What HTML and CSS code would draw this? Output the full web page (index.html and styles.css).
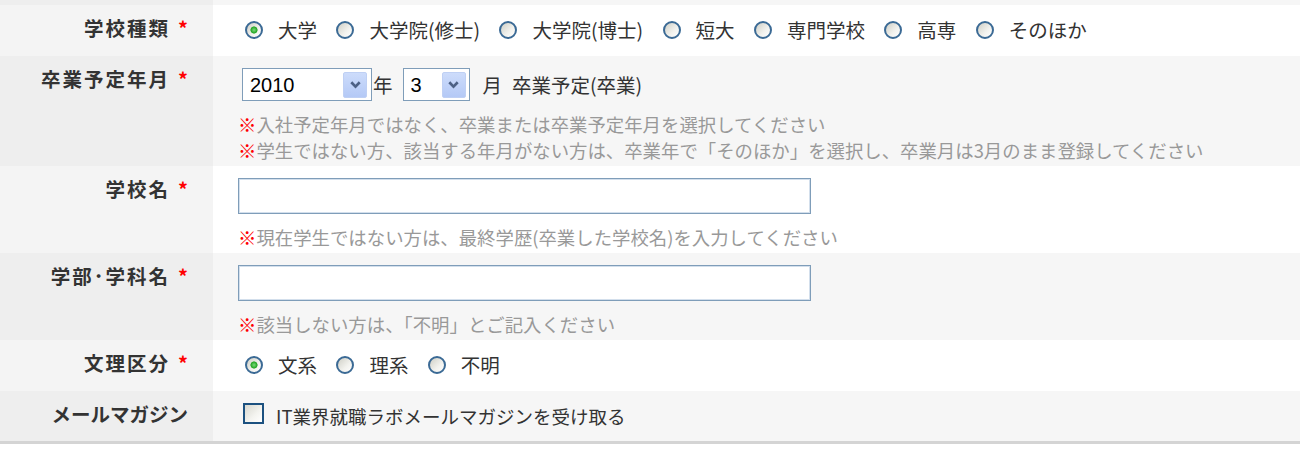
FILE: index.html
```html
<!DOCTYPE html>
<html lang="ja">
<head>
  <meta charset="UTF-8">
  <meta name="viewport" content="width=device-width, initial-scale=1.0">
  <title>エントリー</title>
  <link rel="stylesheet" href="styles.css">
</head>
<body>
  <div class="form">
    <div class="row row-alt stub">
      <div class="label"></div>
      <div class="field"></div>
    </div>

    <div class="row">
      <div class="label">学校種類<span class="req">*</span></div>
      <div class="field">
        <label class="opt"><input type="radio" name="school" checked>大学</label>
        <label class="opt"><input type="radio" name="school">大学院(修士)</label>
        <label class="opt"><input type="radio" name="school">大学院(博士)</label>
        <label class="opt"><input type="radio" name="school">短大</label>
        <label class="opt"><input type="radio" name="school">専門学校</label>
        <label class="opt"><input type="radio" name="school">高専</label>
        <label class="opt"><input type="radio" name="school">そのほか</label>
      </div>
    </div>

    <div class="row row-alt">
      <div class="label">卒業予定年月<span class="req">*</span></div>
      <div class="field field-hint">
        <div class="select-line">
          <span class="select select-year">
            <select name="year"><option>2010</option></select>
            <span class="arrow"><svg width="11" height="8" viewBox="0 0 11 8"><path d="M1.3 1.3 L5.5 5.6 L9.7 1.3" fill="none" stroke="#4d6185" stroke-width="2.7"/></svg></span>
          </span>
          <span class="unit unit-year">年</span>
          <span class="select select-month">
            <select name="month"><option>3</option></select>
            <span class="arrow"><svg width="11" height="8" viewBox="0 0 11 8"><path d="M1.3 1.3 L5.5 5.6 L9.7 1.3" fill="none" stroke="#4d6185" stroke-width="2.7"/></svg></span>
          </span>
          <span class="unit unit-month">月</span>
          <span class="status">卒業予定(卒業)</span>
        </div>
        <div class="hints">
          <p class="hint"><span class="mark">※</span>入社予定年月ではなく、卒業または卒業予定年月を選択してください</p>
          <p class="hint"><span class="mark">※</span>学生ではない方、該当する年月がない方は、卒業年で「そのほか」を選択し、卒業月は3月のまま登録してください</p>
        </div>
      </div>
    </div>

    <div class="row">
      <div class="label">学校名<span class="req">*</span></div>
      <div class="field field-hint">
        <input class="text" type="text" name="school_name">
        <div class="hints">
          <p class="hint"><span class="mark">※</span>現在学生ではない方は、最終学歴(卒業した学校名)を入力してください</p>
        </div>
      </div>
    </div>

    <div class="row row-alt">
      <div class="label">学部･学科名<span class="req">*</span></div>
      <div class="field field-hint">
        <input class="text" type="text" name="faculty">
        <div class="hints">
          <p class="hint"><span class="mark">※</span>該当しない方は、「不明」とご記入ください</p>
        </div>
      </div>
    </div>

    <div class="row">
      <div class="label">文理区分<span class="req">*</span></div>
      <div class="field">
        <label class="opt"><input type="radio" name="course" checked>文系</label>
        <label class="opt"><input type="radio" name="course">理系</label>
        <label class="opt"><input type="radio" name="course">不明</label>
      </div>
    </div>

    <div class="row row-alt">
      <div class="label label-kana">メールマガジン</div>
      <div class="field">
        <label class="check"><input type="checkbox" name="mailmag">IT業界就職ラボメールマガジンを受け取る</label>
      </div>
    </div>
  </div>
</body>
</html>
```

FILE: styles.css
```css
* {
  margin: 0;
  padding: 0;
  box-sizing: border-box;
}
body {
  font-family: "Noto Sans CJK JP", "Noto Sans", sans-serif;
  color: #333;
  background-color: #fff;
}
.form {
  border-bottom: 3px solid #d4d4d4;
}
.row {
  display: flex;
  background-color: #fff;
}
.row .label {
  flex: none;
  width: 213px;
  padding: 10px 25px 0 0;
  background-color: #f4f4f4;
  text-align: right;
  font-size: 19.5px;
  font-weight: bold;
  line-height: 26px;
  letter-spacing: 2px;
  color: #333;
}
.row .label-kana {
  letter-spacing: 0;
}
.row .field {
  flex: 1;
  padding: 12px 25px;
  font-size: 19.5px;
  line-height: 26px;
}
.row .field-hint {
  padding-bottom: 3px;
}
.row-alt {
  background-color: #f6f6f6;
}
.row-alt .label {
  background-color: #eee;
}
.stub {
  height: 5px;
}
.stub .label,
.stub .field {
  padding: 0;
}
.req {
  margin-left: 8px;
  color: #f00;
  letter-spacing: 0;
}

/* radio */
.opt {
  display: inline-flex;
  align-items: center;
  margin-right: 8px;
  color: #333;
}
.opt input {
  appearance: none;
  -webkit-appearance: none;
  flex: none;
  width: 18px;
  height: 18px;
  margin: 0 15px 0 7px;
  border: 2px solid #3b6a95;
  border-radius: 50%;
  background: linear-gradient(135deg, #cfcfc6, #f2f2ee 60%, #fff);
}
.opt input:checked {
  background: radial-gradient(circle, #7ada7a 0, #22a422 3.2px, transparent 3.9px),
    linear-gradient(135deg, #cfcfc6, #f2f2ee 60%, #fff);
}

/* select */
.select-line {
  display: flex;
  align-items: center;
  height: 33px;
  margin-bottom: 3px;
}
.select {
  display: flex;
  align-items: center;
  height: 33px;
  border: 1px solid #7f9db9;
  background-color: #fff;
  padding: 0 4px 0 7px;
}
.select-year {
  width: 130px;
  margin-left: 4px;
}
.select-month {
  width: 67px;
  padding-right: 3px;
}
.select select {
  appearance: none;
  -webkit-appearance: none;
  flex: 1;
  min-width: 0;
  border: 0;
  outline: 0;
  background: transparent;
  font-family: "Liberation Sans", Arial, sans-serif;
  font-size: 20px;
  color: #000;
}
.select .arrow {
  display: flex;
  align-items: center;
  justify-content: center;
  width: 24px;
  height: 26px;
  border: 1px solid #bfd0f4;
  border-radius: 2px;
  background: linear-gradient(#cddcfb, #b4c9f6);
}
.unit-year {
  margin: 0 10px 0 1px;
}
.unit-month {
  margin-left: 13px;
}
.status {
  margin-left: 10px;
}

/* text input */
.text {
  display: block;
  width: 573px;
  height: 36px;
  border: 1px solid #7f9db9;
  box-shadow: inset 0 0 0 1px #d3dfec;
  background-color: #fff;
  outline: 0;
}

/* hints */
.hints {
  margin-top: 10px;
}
.hint {
  font-size: 18.4px;
  line-height: 26px;
  color: #999;
}
.hint .mark {
  color: #f00;
}

/* checkbox */
.check {
  display: flex;
  align-items: flex-start;
  font-size: 18.5px;
  color: #333;
}
.check input {
  appearance: none;
  -webkit-appearance: none;
  flex: none;
  width: 21px;
  height: 21px;
  margin: 0 12px 0 5px;
  border: 2px solid #1c5180;
  background: linear-gradient(135deg, #d8d8d0, #f4f4f0 60%, #fff);
}
```
